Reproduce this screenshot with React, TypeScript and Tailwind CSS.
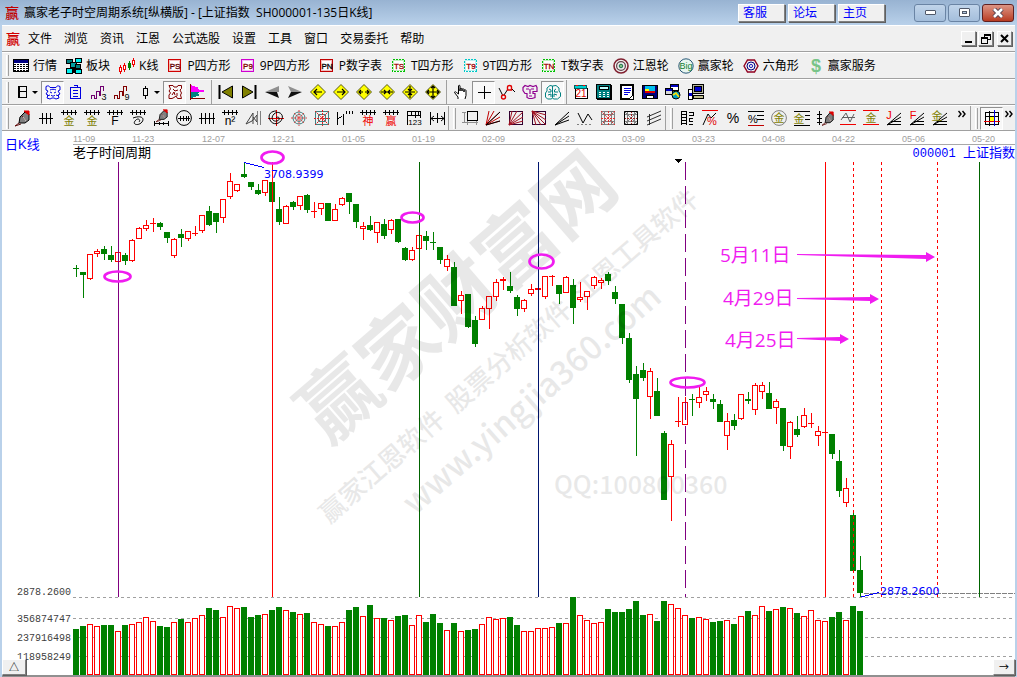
import type { ReactNode } from "react";

// [rising, high, bodyTop, bodyBottom, low, volumeTop]
type Candle = [number, number, number, number, number, number];

const candles: Candle[] = [
    [0, 265, 268, 269, 277, 629], [0, 272, 272, 275, 298, 626], [1, 254, 254, 279, 280, 624], [1, 249, 251, 254, 257, 626],
    [0, 246, 249, 254, 260, 625], [0, 246, 255, 260, 262, 625], [1, 252, 252, 262, 262, 631], [0, 253, 255, 261, 265, 625],
    [1, 239, 240, 261, 262, 624], [1, 227, 228, 239, 239, 622], [1, 220, 225, 229, 231, 617], [1, 218, 223, 224, 232, 621],
    [0, 222, 223, 227, 230, 626], [0, 232, 232, 238, 243, 627], [1, 238, 239, 256, 258, 622], [0, 229, 234, 238, 247, 619],
    [1, 231, 231, 239, 241, 622], [1, 226, 233, 234, 236, 618], [1, 215, 215, 231, 233, 615], [0, 206, 211, 225, 226, 608],
    [0, 213, 213, 222, 233, 610], [1, 199, 199, 218, 223, 617], [1, 173, 181, 197, 199, 606], [1, 184, 184, 191, 192, 608],
    [0, 162, 174, 177, 178, 607], [0, 182, 182, 187, 190, 617], [0, 184, 190, 194, 195, 615], [1, 180, 180, 193, 196, 614],
    [0, 182, 182, 202, 202, 610], [0, 197, 209, 222, 225, 607], [1, 205, 206, 224, 224, 610], [0, 201, 202, 207, 210, 612],
    [1, 196, 196, 206, 210, 614], [0, 194, 195, 210, 213, 613], [1, 202, 211, 212, 218, 622], [1, 203, 203, 209, 215, 624],
    [0, 203, 203, 221, 221, 626], [1, 204, 209, 221, 221, 626], [1, 197, 198, 205, 206, 622], [0, 193, 193, 202, 214, 610],
    [0, 204, 204, 222, 228, 607], [1, 222, 226, 229, 240, 616], [0, 216, 225, 230, 231, 605], [1, 222, 222, 233, 243, 618],
    [0, 219, 224, 236, 239, 618], [1, 219, 220, 230, 234, 620], [0, 219, 219, 242, 243, 616], [0, 247, 248, 260, 261, 615],
    [1, 247, 250, 260, 261, 625], [1, 235, 235, 249, 249, 615], [0, 231, 236, 241, 250, 622], [0, 232, 242, 243, 250, 614],
    [0, 247, 247, 260, 264, 623], [1, 255, 259, 267, 271, 630], [0, 262, 267, 306, 306, 623], [1, 291, 295, 301, 314, 631],
    [0, 294, 294, 327, 328, 630], [0, 316, 320, 344, 347, 629], [1, 306, 308, 320, 320, 624], [1, 296, 296, 309, 329, 617],
    [1, 279, 282, 297, 301, 619], [1, 277, 279, 281, 290, 618], [0, 272, 286, 291, 293, 617], [0, 295, 297, 309, 316, 625],
    [1, 299, 300, 309, 312, 631], [1, 284, 289, 294, 296, 631], [1, 288, 288, 290, 290, 628], [1, 276, 276, 297, 299, 628],
    [1, 275, 276, 277, 286, 627], [0, 285, 285, 294, 304, 623], [1, 276, 277, 293, 293, 623], [0, 279, 285, 308, 324, 597],
    [1, 282, 297, 300, 302, 615], [1, 291, 291, 297, 310, 620], [1, 276, 277, 286, 289, 623], [1, 278, 280, 283, 289, 622],
    [0, 272, 274, 281, 285, 609], [0, 286, 292, 299, 304, 612], [0, 304, 304, 338, 344, 612], [0, 333, 338, 380, 383, 609],
    [0, 366, 374, 399, 456, 601], [0, 363, 370, 378, 381, 615], [1, 368, 371, 397, 419, 614], [0, 378, 391, 416, 416, 621],
    [0, 431, 433, 500, 500, 601], [1, 440, 444, 477, 521, 604], [1, 397, 421, 422, 427, 608], [1, 397, 402, 425, 425, 615],
    [0, 394, 399, 400, 416, 618], [1, 387, 397, 403, 408, 617], [1, 387, 391, 395, 401, 619], [0, 394, 399, 402, 409, 622],
    [0, 400, 404, 422, 422, 621], [1, 413, 421, 436, 450, 620], [0, 414, 420, 426, 430, 624], [1, 394, 394, 419, 420, 616],
    [0, 392, 399, 401, 404, 611], [1, 383, 385, 410, 415, 615], [1, 382, 385, 392, 399, 606], [0, 382, 393, 409, 409, 611],
    [1, 399, 401, 408, 424, 609], [0, 408, 408, 446, 451, 607], [1, 421, 422, 447, 459, 608], [0, 416, 429, 435, 437, 613],
    [1, 408, 415, 427, 428, 616], [1, 413, 423, 424, 428, 610], [1, 426, 431, 436, 446, 620], [1, 432, 432, 433, 433, 621],
    [0, 434, 434, 454, 459, 617], [0, 450, 461, 491, 497, 612], [1, 478, 488, 503, 507, 620], [0, 511, 515, 571, 571, 606],
    [0, 556, 570, 593, 597, 611],
];

const dates: [number, string][] = [
    [73, "11-09"], [132, "11-23"], [202, "12-07"], [272, "12-21"], [342, "01-05"], [412, "01-19"], [482, "02-09"],
    [552, "02-23"], [622, "03-09"], [692, "03-23"], [762, "04-08"], [832, "04-22"], [902, "05-06"], [972, "05-20"],
];

// vertical time lines: x, colour, dash
const timeLines: [number, string, string?][] = [
    [118, "#800080"], [272, "#ff0000"], [419, "#006400"], [538, "#00146e"], [685, "#800080", "18 6"],
    [825, "#ff0000"], [853, "#ff0000", "3 3"], [881, "#ff0000", "3 3"], [937, "#ff0000", "3 3"], [979, "#006400"],
];

const rings = [
    [117, 276, 13, 5], [272, 157, 11, 6], [412, 217, 11, 5], [541, 261, 12, 7], [687, 382, 17, 5],
];

// x, baseline, label, arrow start y, arrow tip x, arrow tip y
const notes: [number, number, string, number, number, number][] = [
    [720, 262, "5月11日", 254, 935, 257],
    [723, 305, "4月29日", 298, 879, 299],
    [725, 347, "4月25日", 338, 849, 339],
];

const menus = ["文件", "浏览", "资讯", "江恩", "公式选股", "设置", "工具", "窗口", "交易委托", "帮助"];

const ARIAL = "font-['Liberation_Sans','Noto_Sans_CJK_SC',sans-serif]";
const YAHEI = "font-['Open_Sans','Noto_Sans_CJK_SC',sans-serif]";
const NOTO = "font-['Noto_Sans_CJK_SC',sans-serif]";

function Icon({ children, smooth }: { children: ReactNode; smooth?: boolean }) {
    return (
        <svg
            className="size-4 shrink-0 overflow-visible"
            viewBox="0 0 16 16"
            fill="none"
            stroke="#000"
            shapeRendering={smooth ? "auto" : "crispEdges"}
            aria-hidden="true"
        >
            {children}
        </svg>
    );
}

function Glyph({ x, y, size = 11, color = "#000", children }: { x: number; y: number; size?: number; color?: string; children: string }) {
    return (
        <text x={x} y={y} fontSize={size} fill={color} stroke="none" textAnchor="middle" className={ARIAL}>
            {children}
        </text>
    );
}

function BoxLabel({ text, border, color, dashed }: { text: string; border: string; color: string; dashed?: boolean }) {
    return (
        <Icon>
            <rect x="1.5" y="1.5" width="12" height="12" fill="#fff" stroke={border} strokeDasharray={dashed ? "2 1" : undefined} />
            <rect x="2.5" y="2.5" width="10" height="10" stroke={border} strokeOpacity="0.25" />
            <text x="8" y="11" fontSize="8" fill={color} stroke={color} strokeWidth="0.3" textAnchor="middle" className={ARIAL}>{text}</text>
        </Icon>
    );
}

// ---- first toolbar ----
const moduleButtons: [string, ReactNode][] = [
    ["行情", (
        <Icon>
            <rect x="0.5" y="1.5" width="15" height="12" fill="#fff" />
            <path d="M1 3h14" stroke="#000080" strokeWidth="3" />
            <path d="M1 6.5h14M1 8.5h14M1 10.5h14M1 12.5h14" strokeDasharray="2 1" />
        </Icon>
    )],
    ["板块", (
        <Icon>
            <path d="M0.5 1.5h6v4h-6z" fill="#008080" />
            <path d="M9.5 0.5h6v4h-6z" fill="#00f0f0" />
            <path d="M4.500 4.500h6v5h-6z" fill="#00a0a0" />
            <path d="M9.500 6.500h5v4h-5z" fill="#008080" />
            <path d="M0.500 10.500h6v5h-6z" fill="#00f0f0" />
            <path d="M9.500 11.500h6v4h-6z" fill="#00f0f0" />
            <path d="M7.500 9v6" strokeWidth="2" />
        </Icon>
    )],
    ["K线", (
        <Icon>
            <g stroke="#f00000">
                <path d="M1.5 7v9M5.5 5v9M14.5 0v9" />
                <rect x="0.5" y="9.5" width="2" height="4" fill="#fff" />
                <rect x="4.5" y="7.5" width="2" height="4" fill="#fff" />
                <rect x="13.5" y="2.5" width="2" height="4" fill="#fff" />
            </g>
            <path d="M10.5 3v9" stroke="#008000" />
            <rect x="9.5" y="5.5" width="2" height="4" fill="#008000" stroke="#008000" />
        </Icon>
    )],
    ["P四方形", <BoxLabel text="PS" border="#d00000" color="#600000" />],
    ["9P四方形", <BoxLabel text="P9" border="#d000d0" color="#800000" />],
    ["P数字表", <BoxLabel text="PN" border="#c00000" color="#000000" />],
    ["T四方形", <BoxLabel text="TS" border="#00c000" color="#a00000" dashed />],
    ["9T四方形", <BoxLabel text="T9" border="#00c8c8" color="#a00000" dashed />],
    ["T数字表", <BoxLabel text="TN" border="#00c000" color="#a00000" dashed />],
    ["江恩轮", (
        <Icon smooth>
            <circle cx="8" cy="8" r="7" stroke="#802030" strokeWidth="1.6" />
            <circle cx="8" cy="8" r="4.4" stroke="#604048" strokeWidth="1.2" />
            <circle cx="8" cy="8" r="1.8" fill="#80c080" stroke="#207050" />
        </Icon>
    )],
    ["赢家轮", (
        <Icon smooth>
            <circle cx="8" cy="8" r="7.2" fill="#e8f6f0" stroke="#285878" />
            <Glyph x={8} y={11} size={9} color="#108030">Big</Glyph>
        </Icon>
    )],
    ["六角形", (
        <Icon smooth>
            <path d="M1 8l3.5-6h7l3.5 6-3.5 6h-7z" stroke="#900020" strokeWidth="1.4" />
            <circle cx="8" cy="8" r="4" stroke="#000080" />
            <circle cx="8" cy="8" r="1.6" stroke="#2020c0" />
        </Icon>
    )],
    ["赢家服务", (
        <Icon smooth>
            <text x="8" y="14" fontSize="18" fontWeight="bold" fill="#78c488" stroke="none" textAnchor="middle" className={ARIAL}>$</text>
        </Icon>
    )],
];

function Diamond({ d }: { d: string }) {
    return (
        <Icon smooth>
            <path d="M8 0.5L15.5 8L8 15.5L0.5 8z" fill="#ffff00" stroke="#303000" strokeWidth="0.8" />
            <path d={d} strokeWidth="1.2" />
        </Icon>
    );
}

type Tool = { name: string; icon: ReactNode; pressed?: boolean; caret?: boolean };

// ---- second toolbar ----
const periodTools: Tool[] = [
    { name: "日线周期", caret: true, icon: <Icon><path d="M4.5 2v12M5.5 2v12M12.5 2v12M4 2.5h9M4 7.5h9M4 13.5h9" /></Icon> },
    { name: "云图", pressed: true, icon: (
        <Icon smooth>
            <g stroke="#0000e0">
                <path d="M1 6V2.500c2-1 3-1 4 1h6c1-2 2-2 4-1V6l-2 1 2 3-2 1 1 3-3 1-2-1H7l-2 1-3-1 1-3-2-1 2-3z" />
                <path d="M5 6c2-1 4-1 6 0M5 8l2 1M11 8L9 9M6 11c1 1.500 3 1.500 4 0M2 12l3-1M14 12l-3-1" />
            </g>
        </Icon>
    ) },
    { name: "记录", icon: <Icon><path d="M2.5 3.5h10v11h-10zM5.5 1.5h4v2M5 6.5h5M5 9.5h5M5 12.5h5" stroke="#0000e0" /></Icon> },
    { name: "三段", icon: <Icon><path d="M0.5 15v-4h3v3h2v-7h3v4h1v-9h3v5" stroke="#700070" /><Glyph x={13} y={16} size={9}>3</Glyph></Icon> },
    { name: "九段", icon: <Icon><path d="M0.5 15v-4h3v3h2v-7h3v4h1v-9h3v5" stroke="#800000" /><Glyph x={13} y={16} size={9}>9</Glyph></Icon> },
    { name: "蜡烛图", caret: true, icon: <Icon><path d="M9.5 2v2M9.5 12v3" /><rect x="7.5" y="4.5" width="4" height="7" /></Icon> },
    { name: "形态", pressed: true, icon: (
        <Icon smooth>
            <path d="M2 1.500h4l1 1.500 3 0 1-1.500h3.500v3L13 6l1.500 3-1 2 1 3.500h-4L9 12l-2 1.500-2 1H2V11l1.500-2L2 7l1.500-2zM6 5l2 2 3-1M5 11l2-3 1 3M10 9v3" stroke="#800000" />
        </Icon>
    ) },
    { name: "筹码分布", icon: (
        <Icon>
            <path d="M1 1l8 3-3 1 10 2-5 1H1z" fill="#ff00ff" stroke="none" />
            <path d="M1 8h9l-3 2 3 1-9 3z" fill="#008080" stroke="none" />
            <path d="M0.5 0v16M0 14.5h15" stroke="#800000" />
        </Icon>
    ) },
];

const moveTools: Tool[] = [
    { name: "首页", icon: <Icon smooth><path d="M1.5 1v14" strokeWidth="2" /><path d="M14.5 2v12L4 8z" fill="#808000" /></Icon> },
    { name: "末页", icon: <Icon smooth><path d="M14.5 1v14" strokeWidth="2" /><path d="M1.5 2v12L12 8z" fill="#808000" /></Icon> },
    { name: "后退", icon: <Icon smooth><path d="M15 2v6H1z" fill="#909090" stroke="none" /><path d="M15 14l-2-6H1z" fill="#101010" stroke="none" /></Icon> },
    { name: "前进", icon: <Icon smooth><path d="M1 2l3 6h11z" fill="#909090" stroke="none" /><path d="M1 14l3-6h11z" fill="#101010" stroke="none" /></Icon> },
    { name: "左移", icon: <Diamond d="M4 8h8M7 5L4 8l3 3" /> },
    { name: "右移", icon: <Diamond d="M4 8h8M9 5l3 3-3 3" /> },
    { name: "横向放大", icon: <Diamond d="M3 8h4M9 8h4M5 6L3 8l2 2M11 6l2 2-2 2" /> },
    { name: "横向缩小", icon: <Diamond d="M2 8h12M5 6l2 2-2 2M11 6L9 8l2 2" /> },
    { name: "纵向缩小", icon: <Diamond d="M8 2v12M3 8h10M6 5l2 2 2-2M6 11l2-2 2 2" /> },
    { name: "全部显示", icon: <Diamond d="M8 2v12M2 8h12M6 4l2-2 2 2M6 12l2 2 2-2M4 6L2 8l2 2M12 6l2 2-2 2" /> },
];

const cursorTools: Tool[] = [
    { name: "手形", icon: <Icon smooth><path d="M5 15v-2L1.5 8.5c0-1 1-1 2 0L5.5 10V2c0-1 1.5-1 1.5 0v5V5c0-1 2-1 2 0v2V5.5c0-1 2-1 2 0V8V6.5c0-1 2-1 2 0v5L12 15" fill="#fff" /></Icon> },
    { name: "十字光标", pressed: true, icon: <Icon><path d="M8.5 2v13M2 8.5h13" /></Icon> },
    { name: "连线", icon: <Icon smooth><path d="M0 4l4 8M5 11l4-6M12 4l4 4" /><g stroke="#e00000" strokeWidth="1.4"><circle cx="4.5" cy="13" r="2" /><path d="M8.500 6V3c0-2 4-2 4 0v3z" /></g></Icon> },
    { name: "区块", icon: <Icon smooth><path d="M1 3.5l2-2 3 1 2-1 3 1 3-1 1 2v4h-4v2h2v4l-3 1-3 0-2-1v-4H3l-2-3zM4 5h3M9 5h3M8 5v5M7 12h3" stroke="#900090" strokeWidth="1.2" /></Icon> },
    { name: "云带", pressed: true, icon: <Icon smooth><path d="M7.500 2L5 1.500 2 4v3L0.500 9v4l2 2h4l1-1.500 1 1.500h4l3-2.500V9L14 7V4l-3-2.500zM7.500 2v11.500M4 5l2 1v2H3M11 5L9.500 6v2H13M3 11l3-1v3M12 11l-3-1v3" stroke="#008080" /></Icon> },
];

const systemTools: Tool[] = [
    { name: "日历", icon: <Icon><path d="M2.5 4.5h12v10h-12z" fill="#fff" /><path d="M1.5 1.5h12v3h-12z" fill="#00d0d0" stroke="#006060" /><path d="M3 1.500h2M10 1.500h2" stroke="#f00" /><Glyph x={8} y={13} size={10} color="#e00000">21</Glyph></Icon> },
    { name: "计算器", icon: <Icon><path d="M0.5 0.5h14v14h-14z" fill="#008080" /><path d="M3.5 2.5h9v3h-9z" fill="#c0ffff" /><path d="M3 8.5h10M3 10.5h10M3 12.5h10" stroke="#fff" strokeDasharray="2 2" /><path d="M15.500 1v15M1 15.500h15" /></Icon> },
    { name: "笔记", icon: <Icon><path d="M2 1h12v14H2z" fill="#fff" strokeWidth="2" /><path d="M5 4.5h7M5 6.5h7M5 8.5h6M5 10.5h4" stroke="#0000e0" /><path d="M10 15l4-4v4z" fill="#fff" /></Icon> },
    { name: "保存图片", icon: <Icon><rect x="0.5" y="1.5" width="15" height="13" fill="#000080" /><path d="M3 2h10v7H3z" fill="#00c0f0" stroke="none" /><path d="M3 5h4v2H3z" fill="#ffff00" stroke="none" /><path d="M3 7h10v2H3z" fill="#e00000" stroke="none" /><path d="M4.5 11.5h7v3h-7z" fill="#fff" /></Icon> },
    { name: "网络", icon: <Icon smooth><rect x="5.5" y="0.5" width="8" height="6" fill="#fff" /><path d="M6 2h7" stroke="#0000c0" strokeWidth="2" /><rect x="0.5" y="4.500" width="7" height="6" fill="#d8d8d8" /><path d="M1 6h6" stroke="#0000c0" strokeWidth="2" /><circle cx="11" cy="11" r="4" fill="#00a0c0" /><path d="M8 11l3-2 3 4" stroke="#ffe000" strokeWidth="1.600" /></Icon> },
    { name: "电脑", icon: <Icon><path d="M4.5 0.5h11v9h-11z" fill="#b8b8a0" /><path d="M6.5 2.5h7v5h-7z" fill="#0000d0" /><path d="M5.5 11.5h10v3h-10z" fill="#c0c090" /><path d="M0.5 5.5h4v10h-4z" fill="#fff" /><path d="M1 10.500h3" stroke="#0000d0" strokeWidth="3" /></Icon> },
];

const COMB = "M0 2.5h16M2.5 0v5M6.5 0v5M10.5 0v5M14.5 0v5";
const RAYS = "M1 15L4 1M1 15L9 1M1 15L15 2M1 15l14-8M1 15l14-4";
const PEN = (
    <g>
        <path d="M5 7l5-5 4 2v6l-4 3H4z" fill="#808080" />
        <path d="M9 1h5v4z" fill="#e00000" stroke="#e00000" />
        <path d="M7 6l4 5M4 13l-4 3 6-2" stroke="#601010" />
        <path d="M8 7l3 4" stroke="#d0d0d0" />
    </g>
);

// ---- third toolbar ----
const cycleTools: Tool[] = [
    { name: "画笔", icon: <Icon smooth>{PEN}</Icon> },
    { name: "等分线", icon: <Icon><path d="M1 8.5h14M4.5 3v11M8.5 3v11M12.5 3v11" /></Icon> },
    { name: "黄金周期", icon: <Icon><path d={COMB} /><Glyph x={8} y={15} color="#808000">金</Glyph></Icon> },
    { name: "黄金周期二", icon: <Icon><path d={COMB} /><Glyph x={8} y={15} color="#808000">金</Glyph></Icon> },
    { name: "费氏周期", icon: <Icon><path d={COMB} /><Glyph x={8} y={15} size={12}>F</Glyph></Icon> },
    { name: "螺旋周期", icon: <Icon><path d={COMB} /><path d="M3 8c8-3 12 0 9 4s-10 3-7-1 6-1 4 1" shapeRendering="auto" /></Icon> },
    { name: "画线笔", icon: <Icon smooth><g transform="translate(3 -1) scale(.8)">{PEN}</g><path d="M1 13.5h15M1.5 11v5M6.5 12v3M10.5 12v3M15.5 11v5" /></Icon> },
    { name: "周期圆", icon: <Icon smooth><circle cx="8" cy="8" r="7.4" /><path d="M2 8.5h12M4.5 6v5M7.5 6v5M10.5 6v5M12.5 6v5" /></Icon> },
    { name: "时间尺", icon: <Icon><path d="M0 8.5h16M2.5 3v11M6.5 3v11M10.5 3v11M14.5 3v11" /></Icon> },
    { name: "平方周期", icon: <Icon><path d={COMB} /><Glyph x={8} y={15} size={12}>n²</Glyph></Icon> },
    { name: "三角镜像", icon: <Icon smooth><path d="M1 14l7-11v11M1 14l6-3 5-6v7L8 7" stroke="#404040" /><path d="M12.5 1v14M15.5 1v14" stroke="#808080" /></Icon> },
    { name: "螺旋", icon: <Icon smooth><path d="M0 8.5h16M8.5 0v16" stroke="#e00000" /><path d="M8 8c3-3 5 2 1 3s-7-3-3-7 10 0 8 5-9 7-12 1 2-9 6-9" /></Icon> },
    { name: "圆形辐射", icon: <Icon smooth><g stroke="#408080"><circle cx="8" cy="8" r="6" /><circle cx="8" cy="8" r="3.5" /></g><path d="M8 0v16M0 8h16M3 3l10 10M13 3L3 13" stroke="#e04040" strokeDasharray="2 1" /></Icon> },
    { name: "方形辐射", icon: <Icon smooth><path d="M1.5 1.5h13v13h-13zM4.5 4.5h7v7h-7z" stroke="#408080" /><path d="M8.5 0v16M0 8.5h16M1 1l14 14M15 1L1 15" stroke="#e02020" strokeDasharray="2 1" /></Icon> },
    { name: "分段标记", icon: <Icon><path d="M0.5 2v13M1 8.5l4-2M6.5 4v11M9.5 1v3M12.5 1v3M15.5 1v3" /></Icon> },
    { name: "神奇周期", icon: <Icon><path d={COMB} /><Glyph x={8} y={15} color="#f00000">神</Glyph></Icon> },
    { name: "赢家周期", icon: <Icon><path d={COMB} /><Glyph x={8} y={15} color="#f00000">赢</Glyph></Icon> },
    { name: "数字尺", icon: <Icon><path d="M1.5 1v14M1 1.5h14M1 5.5h14M14.5 1v7M5.5 2v3M9.5 2v6M12.5 2v3" /><Glyph x={9} y={15} size={8}>123</Glyph></Icon> },
    { name: "区间宽度", icon: <Icon><path d="M1.5 2v13M15.5 2v13M8.5 3v10M2 8.5h13" /><path d="M5 6L2 8.5l3 2.5M12 6l3 2.5-3 2.5" shapeRendering="auto" /></Icon> },
];

const spaceTools: Tool[] = [
    { name: "矩形", icon: <Icon><path d="M0 2.5h4M2.5 3v9M0 12.5h16M5.5 11v4M14.5 11v4" stroke="#909090" /><rect x="5.5" y="1.5" width="10" height="9" /></Icon> },
    { name: "江恩角度线", icon: <Icon smooth><path d={RAYS} stroke="#c00000" /><path d="M1 15L15 2M1 15l14-4" /></Icon> },
    { name: "框内上升线", icon: <Icon smooth><rect x="1.5" y="1.5" width="13" height="13" stroke="#300030" /><path d={RAYS} stroke="#a01020" /></Icon> },
    { name: "框内下降线", icon: <Icon smooth><rect x="1.5" y="1.5" width="13" height="13" stroke="#300030" /><path d="M1 1l14 14M1 1l14 9M1 1l9 14M1 1l4 14M1 1l14 4" stroke="#a01020" /></Icon> },
    { name: "速阻线", icon: <Icon smooth><path d="M1 15L15 2M1 15l14-9M1 15l14-5" /></Icon> },
    { name: "折线", icon: <Icon smooth><path d="M1 3l5 10 5-9 4 6" /><path d="M0 14.5h16" strokeDasharray="2 2" stroke="#808080" /></Icon> },
    { name: "四方网格", icon: <Icon smooth><path d="M1.5 1.5h13v13h-13zM4.5 1v14M11.5 1v14M1 4.5h14M1 11.5h14" stroke="#808080" /><path d="M8.5 1v14M1 8.5h14M1 1l14 14M15 1L1 15" stroke="#e03030" strokeDasharray="2 1" /></Icon> },
    { name: "四方网格二", icon: <Icon smooth><path d="M4.5 1v14M11.5 1v14M1 4.5h14M1 11.5h14M1 1l14 14M15 1L1 15" stroke="#808080" /><path d="M8.5 1v14M1 8.5h14" stroke="#a02020" strokeDasharray="2 1" /><path d="M1.5 1.5h13v13h-13z" /></Icon> },
    { name: "平行线", icon: <Icon smooth><path d="M1 7l14-6M1 11l14-6M1 15l14-6M3.5 4v11" stroke="#303030" /></Icon> },
];

const rateTools: Tool[] = [
    { name: "价格尺", icon: <Icon><path d="M2 1.5h5M2 4.5h5M2 7.5h5M2 10.5h5M2 13.5h5M2.5 1v14M7.5 1v14M10 2.5h4M10 5.5h4M10 8.5h4M10 11.5h4M10 14.500h4M14.500 2v4M10.500 9v3" /></Icon> },
    { name: "百分比回调", icon: <Icon smooth><path d="M0 0.5h16" stroke="#f00000" /><path d="M1 15L6 4l3 4 5-5" /><Glyph x={10} y={15} color="#e00000">%</Glyph></Icon> },
    { name: "百分比", icon: <Icon smooth><Glyph x={8} y={13} size={14}>%</Glyph></Icon> },
    { name: "百分比线", icon: <Icon><path d="M0 1.5h16M9 5.5h7M9 9.5h7" /><path d="M0 15.5h16" stroke="#c00000" /><Glyph x={5} y={13}>%</Glyph></Icon> },
    { name: "黄金圆", icon: <Icon smooth><circle cx="8" cy="8" r="7.4" stroke="#808080" /><Glyph x={8} y={12} color="#808000">金</Glyph></Icon> },
    { name: "黄金线", icon: <Icon><path d="M0 1.5h16M11 5.5h5M11 9.5h5M0 15.5h16" /><Glyph x={5} y={13} color="#808000">金</Glyph></Icon> },
    { name: "价格画笔", icon: <Icon smooth><path d="M2.5 1v14M0 4.5h5M0 8.5h5M0 12.5h5" /><g transform="translate(5 1) scale(.8 .9)">{PEN}</g></Icon> },
    { name: "波动线", icon: <Icon smooth><path d="M0 0.5h16M0 14.5h16" stroke="#f00000" /><path d="M1 10L6 3l4 9 4-8M2 7.5h13" stroke="#606060" /></Icon> },
    { name: "黄金区间", icon: <Icon><path d="M0 0.5h16M0 14.5h16" stroke="#f00000" /><Glyph x={8} y={12} color="#808000">金</Glyph></Icon> },
    { name: "J角度线", icon: <Icon smooth><path d="M1 15L15 3M1 15l14-8M1 14.5h14M5 11.5h10" /><Glyph x={3} y={9} color="#f00000">J</Glyph></Icon> },
    { name: "F角度线", icon: <Icon smooth><path d="M1 15L15 3M1 15l14-8M1 14.5h14M5 11.5h10" /><Glyph x={4} y={9} color="#f00000">F</Glyph></Icon> },
    { name: "金角度线", icon: <Icon smooth><path d="M1 15L15 3M1 15l14-8M1 14.5h14M5 11.5h10" /><Glyph x={5} y={10} color="#808000">金</Glyph></Icon> },
];

const gridTool: Tool = {
    name: "网格", pressed: true, icon: (
        <Icon>
            <path d="M1.5 2.5h13v12h-13zM5.5 1v15M1 6.5h14" />
            <rect x="6" y="7" width="4" height="4" fill="#ffff00" stroke="none" />
            <path d="M0 11.5h16" stroke="#e00000" />
            <path d="M10.5 0v16" stroke="#0000e0" />
        </Icon>
    ),
};

function Handle() {
    return <span className="mr-[2px] ml-1 h-[21px] w-[3px] shrink-0 border-r border-l border-r-[#a0a0a0] border-l-white" />;
}

function Divider({ tight }: { tight?: boolean }) {
    return <span className={"h-full w-px shrink-0 bg-[#a0a0a0] " + (tight ? "" : "mx-[2px]")} />;
}

function ToolGroup({ tools }: { tools: Tool[] }) {
    return (
        <div className="flex shrink-0 items-center">
            {tools.map((t) => (
                <button
                    key={t.name}
                    title={t.name}
                    aria-label={t.name}
                    className={
                        "flex h-[23px] shrink-0 items-center justify-center " +
                        (t.caret ? "w-[30px] gap-[2px] " : "w-[23px] ") +
                        (t.pressed ? "border border-t-[#909090] border-r-white border-b-white border-l-[#909090] bg-[#f8f8f8]" : "")
                    }
                >
                    {t.icon}
                    {t.caret && <span className="border-x-[3px] border-t-[3px] border-x-transparent border-t-black" />}
                </button>
            ))}
        </div>
    );
}

function MoreIcon() {
    return (
        <svg className="h-2 w-2" viewBox="0 0 8 8" fill="none" stroke="#000" strokeWidth="1.4">
            <path d="M0.5 1L3 4L0.5 7M4.500 1L7 4L4.500 7" />
        </svg>
    );
}

function RaisedButton({ label, className, children }: { label: string; className: string; children: ReactNode }) {
    return (
        <button
            aria-label={label}
            className={"flex items-center border border-t-white border-r-[#808080] border-b-[#808080] border-l-white bg-[#f0f0f0] shadow-[1px_1px_0_#606060] " + className}
        >
            {children}
        </button>
    );
}

function TitleBar() {
    return (
        <header className="flex h-[25px] items-center bg-linear-to-b from-[#98b3d2] to-[#b9d1ea] pr-[3px] pl-[5px]">
            <span className="text-sm leading-none font-medium text-[#c00000]">赢</span>
            <h1 className="ml-[5px] text-xs whitespace-pre">赢家老子时空周期系统[纵横版] - [上证指数  SH000001-135日K线]</h1>
            <nav className="ml-auto flex gap-[3px]">
                {["客服", "论坛", "主页"].map((t) => (
                    <a key={t} href="#" className="h-[18px] w-[47px] border border-t-white border-r-[#808080] border-b-[#808080] border-l-white bg-[#f0f0f0] pl-1 text-xs leading-4 text-[#0000ff] shadow-[1px_1px_0_#606060]">
                        {t}
                    </a>
                ))}
            </nav>
            <div className="ml-[29px] flex gap-[2px]">
                <button aria-label="最小化" className="flex h-[18px] w-8 items-center justify-center rounded-[3px] border border-[#6a84a4] bg-linear-to-b from-[#c0d4ea] to-[#a4bedb]">
                    <span className="h-[5px] w-[11px] rounded-[1px] border border-[#505868] bg-white" />
                </button>
                <button aria-label="还原" className="flex h-[18px] w-8 items-center justify-center rounded-[3px] border border-[#6a84a4] bg-linear-to-b from-[#c0d4ea] to-[#a4bedb]">
                    <span className="flex h-[9px] w-[11px] items-center justify-center rounded-[1px] border border-[#505868] bg-white">
                        <span className="h-[3px] w-[5px] border border-[#505868] bg-[#b0c8e0]" />
                    </span>
                </button>
                <button aria-label="关闭" className="flex h-[18px] w-8 items-center justify-center rounded-[3px] border border-[#602020] bg-linear-to-b from-[#dc9484] to-[#b83a20]">
                    <svg className="h-[10px] w-3" viewBox="0 0 12 10" fill="none">
                        <path d="M2 1l8 8M10 1L2 9" stroke="#504050" strokeWidth="4.4" />
                        <path d="M2 1l8 8M10 1L2 9" stroke="#fff" strokeWidth="2.6" />
                    </svg>
                </button>
            </div>
        </header>
    );
}

function MenuBar() {
    return (
        <nav className="flex h-[27px] items-center border-t border-b border-t-white border-b-[#a0a0a0] pr-[3px] pl-1">
            <span className="text-sm leading-none font-medium text-[#d00000]">赢</span>
            <ul className="ml-2 flex gap-3 text-xs">
                {menus.map((m) => (
                    <li key={m}><button>{m}</button></li>
                ))}
            </ul>
            <div className="ml-auto flex gap-[2px]">
                <RaisedButton label="最小化窗口" className="size-[15px] justify-center">
                    <span className="mt-[7px] h-[2px] w-[7px] bg-black" />
                </RaisedButton>
                <RaisedButton label="还原窗口" className="size-[15px] justify-center">
                    <svg className="size-[10px]" viewBox="0 0 10 10" fill="none" stroke="#000" shapeRendering="crispEdges">
                        <path d="M3.5 3V1.5h6v4H7M3 0.500h7" /><path d="M0.5 4.5h6v5h-6zM0 3.500h7" />
                    </svg>
                </RaisedButton>
                <RaisedButton label="关闭窗口" className="ml-[2px] size-[15px] justify-center">
                    <svg className="size-[9px]" viewBox="0 0 9 9" stroke="#000" strokeWidth="2"><path d="M1 1l7 7M8 1L1 8" /></svg>
                </RaisedButton>
            </div>
        </nav>
    );
}

function PriceChart() {
    return (
        <svg className={"block h-[544px] w-full bg-white " + ARIAL} shapeRendering="crispEdges">
            <text x="100%" y="26" textAnchor="end" fontSize="13" fill="#0000ff" className="whitespace-pre">
                <tspan className="font-['Liberation_Mono','Noto_Sans_CJK_SC',monospace]" fontSize="12">000001 </tspan>
                上证指数
            </text>
            <line x1="71" x2="100%" y1="13.5" y2="13.5" stroke="#a8a8a8" />
            <g transform="translate(-2 -131)">
                <text x="5" y="149" fontSize="13" fill="#0000ff">日K线</text>
                <text x="73" y="157" fontSize="13" fill="#000">老子时间周期</text>
                {dates.map(([x, d]) => (
                    <text key={d} x={x} y="142" fontSize="9" fill="#a0a0a0">{d}</text>
                ))}

                {/* volume grid */}
                {[597, 618, 637, 656].map((y) => (
                    <line key={y} x1="73" x2="1013" y1={y + 0.5} y2={y + 0.5} stroke="#a0a0a0" strokeDasharray="3 3" />
                ))}
                <line x1="864" x2="1015" y1="593.5" y2="593.5" stroke="#808080" strokeDasharray="5 1" />
                <g fill="#404040" fontSize="10" textAnchor="end" className="font-['Liberation_Mono',monospace]">
                    <text x="71" y="595">2878.2600</text>
                    <text x="71" y="622">356874747</text>
                    <text x="71" y="641">237916498</text>
                    <text x="71" y="660">118958249</text>
                </g>

                {candles.map(([up, high, top, bottom, low, vol], i) => {
                    const x = 76 + i * 7;
                    const color = up ? "#ff0000" : "#008000";
                    const hollow = up && bottom - top > 2;
                    return (
                        <g key={i}>
                            <rect x={x} y={high} width="1" height={low - high} fill={color} />
                            {hollow
                                ? <rect x={x - 2.5} y={top + 0.5} width="5" height={bottom - top - 1} fill="#fff" stroke={color} />
                                : <rect x={x - 3} y={top} width="6" height={bottom - top} fill={color} />}
                            {up
                                ? <rect x={x - 2.5} y={vol + 0.5} width="5" height={674 - vol} fill="#fff" stroke={color} />
                                : <rect x={x - 3} y={vol} width="6" height={675 - vol} fill={color} />}
                        </g>
                    );
                })}

                {timeLines.map(([x, color, dash]) => (
                    <line key={x} x1={x + 0.5} x2={x + 0.5} y1="162" y2="597" stroke={color} strokeDasharray={dash} />
                ))}
                <path d="M675 159h7l-3.5 4z" fill="#000" />

                <path d="M244 162.5L264 167.5M861 597L879 592.5" stroke="#0000ff" />
                <g fill="#0000ff" fontSize="11" className="font-['DejaVu_Sans',sans-serif]">
                    <text x="264" y="178">3708.9399</text>
                    <text x="880" y="595">2878.2600</text>
                </g>

                {/* watermark */}
                <g fill="#000" opacity="0.085" className={NOTO}>
                    <text transform="translate(335 448) rotate(-41)" x="-4" y="-6" fontSize="78" fontWeight="700">赢家财富网</text>
                    <g transform="translate(332 526) rotate(-41)" fontSize="26" fontWeight="500">
                        <text x="-1" y="-3">赢家江恩软件</text>
                        <text x="167" y="-3">股票分析软件</text>
                        <text x="335" y="-3">江恩工具软件</text>
                    </g>
                    <text transform="translate(415 516) rotate(-41)" x="0" y="0" fontSize="33" fontWeight="500">www.yingjia360.com</text>
                    <text x="554" y="494" fontSize="25" fontWeight="500">QQ:100800360</text>
                </g>

                <g stroke="#f01cf0" fill="none" strokeWidth="2.7" shapeRendering="auto">
                    {rings.map(([cx, cy, rx, ry]) => (
                        <ellipse key={cx} cx={cx + 0.5} cy={cy + 0.5} rx={rx} ry={ry} />
                    ))}
                </g>
                <g fill="#f01cf0" shapeRendering="auto">
                    {notes.map(([x, y, label, startY, tipX, tipY]) => (
                        <g key={label}>
                            <text x={x} y={y} fontSize="19" className={YAHEI}>{label}</text>
                            <path d={`M797 ${startY}L${tipX - 9} ${tipY - 2}v-3L${tipX} ${tipY}l-9 5v-3L797 ${startY + 1}z`} />
                        </g>
                    ))}
                </g>
            </g>
        </svg>
    );
}

export default function App() {
    return (
        <div className={"bg-[#b9d1ea] text-black " + YAHEI}>
            <TitleBar />
            <div className="mx-[2px] bg-[#f0f0f0]">
                <MenuBar />

                <div className="flex h-[27px] items-center overflow-hidden border-t border-b border-t-white border-b-[#a0a0a0]">
                    <Handle />
                    <div className="ml-[2px] flex gap-[9px]">
                        {moduleButtons.map(([label, icon]) => (
                            <button key={label} className="flex shrink-0 items-center gap-1 text-xs whitespace-nowrap">
                                {icon}
                                {label}
                            </button>
                        ))}
                    </div>
                </div>

                <div className="flex h-[26px] items-center overflow-hidden border-t border-b border-t-white border-b-[#a0a0a0]">
                    <Handle />
                    <ToolGroup tools={periodTools} />
                    <Divider />
                    <ToolGroup tools={moveTools} />
                    <Divider />
                    <ToolGroup tools={cursorTools} />
                    <Divider />
                    <ToolGroup tools={systemTools} />
                </div>

                <div className="flex h-[26px] items-center overflow-hidden border-t border-b border-t-white border-b-[#a0a0a0]">
                    <Handle />
                    <ToolGroup tools={cycleTools} />
                    <Divider tight />
                    <Handle />
                    <ToolGroup tools={spaceTools} />
                    <Divider tight />
                    <Handle />
                    <ToolGroup tools={rateTools} />
                    <div className="ml-auto flex h-full shrink-0 items-center">
                        <button aria-label="更多画线工具" className="mr-1 pb-2"><MoreIcon /></button>
                        <Divider tight />
                        <Handle />
                        <ToolGroup tools={[gridTool]} />
                        <button aria-label="更多工具" className="flex w-3 justify-center pb-2"><MoreIcon /></button>
                    </div>
                </div>

                <main className="relative border-b-2 border-[#909090]">
                    <PriceChart />
                    <RaisedButton label="展开" className="absolute bottom-0 left-0 h-4 w-6 justify-center text-[10px]">△</RaisedButton>
                    <RaisedButton label="向右" className="absolute right-0 bottom-0 h-4 w-[22px] justify-center text-[10px]">→</RaisedButton>
                </main>
            </div>
        </div>
    );
}
